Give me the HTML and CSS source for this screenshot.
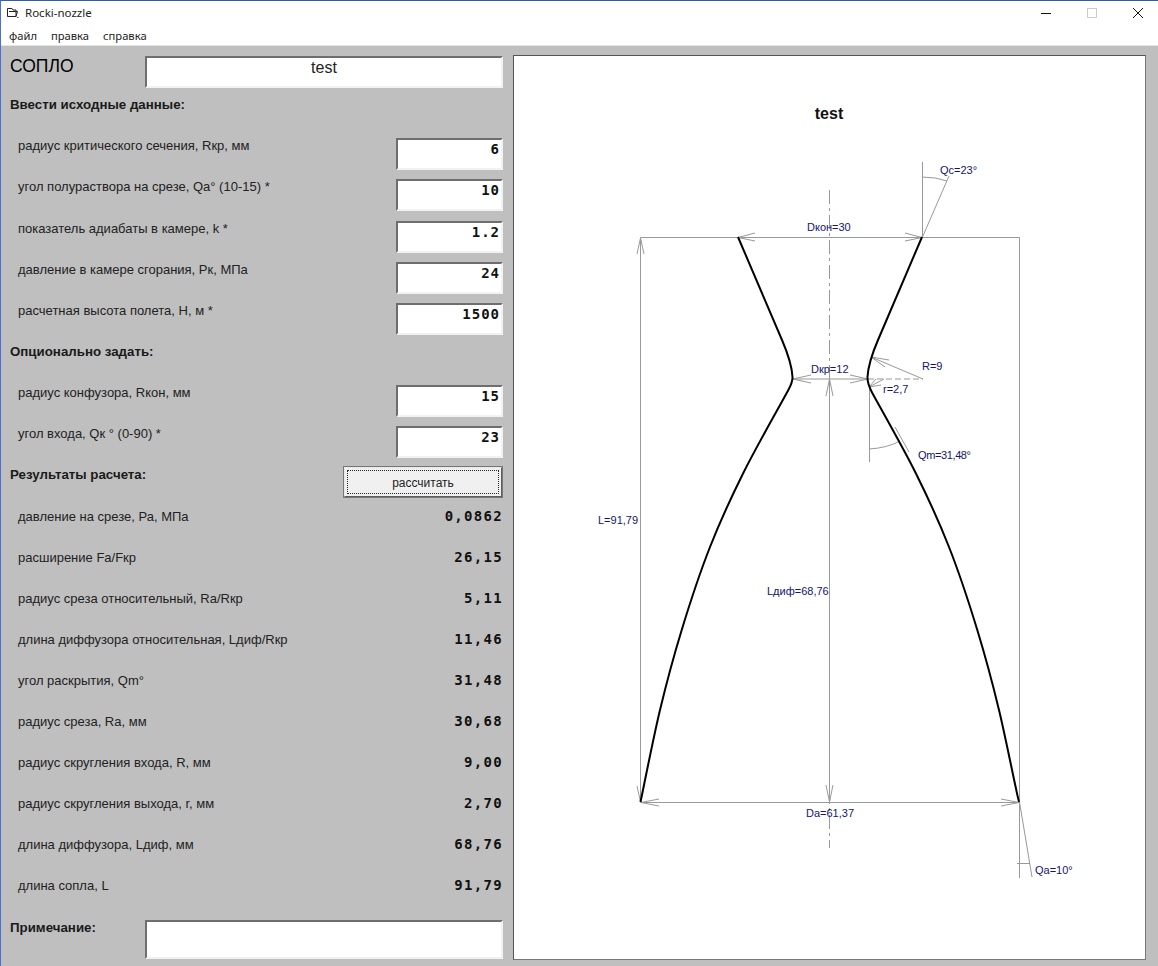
FILE: index.html
```html
<!DOCTYPE html>
<html lang="ru">
<head>
    <meta charset="UTF-8">
    <title>Rocki-nozzle</title>
    <link rel="stylesheet" href="styles.css">
</head>
<body>
    <div class="window">
        <!-- Title bar -->
        <div class="titlebar">
            <svg class="app-icon" width="13" height="12" viewBox="0 0 13 12">
                <path d="M1.5 1.500H6L7 3H10V9.500H1.500Z M3 4.500H11.500L10 9.500" fill="none" stroke="#222" stroke-width="1"/>
                <path d="M11 10.500h1.500" stroke="#555" stroke-width="1"/>
            </svg>
            <span class="app-title">Rocki-nozzle</span>
            <div class="window-buttons">
                <svg width="14" height="12" viewBox="0 0 14 12"><path d="M2 6.500H12" stroke="#111" stroke-width="1"/></svg>
                <svg width="14" height="12" viewBox="0 0 14 12"><rect x="2.500" y="1.500" width="9" height="9" fill="none" stroke="#ccc"/></svg>
                <svg width="14" height="12" viewBox="0 0 14 12"><path d="M2 1L12 11M12 1L2 11" stroke="#111" stroke-width="1"/></svg>
            </div>
        </div>

        <!-- Menu -->
        <div class="menubar">
            <span>файл</span>
            <span>правка</span>
            <span>справка</span>
        </div>

        <div class="content">
            <!-- Left column: inputs and results -->
            <div class="form">
                <div class="title-row">
                    <span class="caption">СОПЛО</span>
                    <input class="sunken name-input" type="text" value="test" readonly>
                </div>

                <h4 class="heading heading-input">Ввести исходные данные:</h4>
                <div class="fields">
                    <div class="field"><label>радиус критического сечения, Rкр, мм</label><input class="sunken num-input" value="6" readonly></div>
                    <div class="field"><label>угол полураствора на срезе, Qa° (10-15) *</label><input class="sunken num-input" value="10" readonly></div>
                    <div class="field"><label>показатель адиабаты в камере, k *</label><input class="sunken num-input" value="1.2" readonly></div>
                    <div class="field"><label>давление в камере сгорания, Рк, МПа</label><input class="sunken num-input" value="24" readonly></div>
                    <div class="field"><label>расчетная высота полета, Н, м *</label><input class="sunken num-input" value="1500" readonly></div>
                </div>

                <h4 class="heading heading-option">Опционально задать:</h4>
                <div class="fields">
                    <div class="field"><label>радиус конфузора, Rкон, мм</label><input class="sunken num-input" value="15" readonly></div>
                    <div class="field"><label>угол входа, Qк ° (0-90) *</label><input class="sunken num-input" value="23" readonly></div>
                </div>

                <div class="results-head">
                    <h4 class="heading">Результаты расчета:</h4>
                    <button class="calc-button"><span>рассчитать</span></button>
                </div>
                <div class="results">
                    <div class="result"><span>давление на срезе, Ра, МПа</span><b>0,0862</b></div>
                    <div class="result"><span>расширение Fa/Fкр</span><b>26,15</b></div>
                    <div class="result"><span>радиус среза относительный, Ra/Rкр</span><b>5,11</b></div>
                    <div class="result"><span>длина диффузора относительная, Lдиф/Rкр</span><b>11,46</b></div>
                    <div class="result"><span>угол раскрытия, Qm°</span><b>31,48</b></div>
                    <div class="result"><span>радиус среза, Ra, мм</span><b>30,68</b></div>
                    <div class="result"><span>радиус скругления входа, R, мм</span><b>9,00</b></div>
                    <div class="result"><span>радиус скругления выхода, r, мм</span><b>2,70</b></div>
                    <div class="result"><span>длина диффузора, Lдиф, мм</span><b>68,76</b></div>
                    <div class="result"><span>длина сопла, L</span><b>91,79</b></div>
                </div>

                <div class="note-row">
                    <h4 class="heading">Примечание:</h4>
                    <div class="sunken note"></div>
                </div>
            </div>

            <!-- Right column: nozzle drawing, viewBox is in window coordinates -->
            <div class="sunken drawing">
                <svg width="631" height="903" viewBox="514 56 631 903">
                    <text class="plot-title" x="829" y="119">test</text>

                    <g class="dim">
                        <!-- axis -->
                        <path d="M829.500 190V848" stroke-dasharray="14 4 3 4"/>
                        <path d="M829.500 379V802"/>
                        <!-- frame -->
                        <path d="M640.500 237.500H1019.500V802.500H640.500Z"/>
                        <!-- arrow heads -->
                        <path d="M738 237.500L755 233M738 237.500L755 241M922 237.500L905 233M922 237.500L905 241"/>
                        <path d="M640.500 238L637 254M640.500 238L644 254M640.500 802L637 786M640.500 802L644 786"/>
                        <path d="M641 802.500L659 799M641 802.500L659 806M1019 802.500L1001 799M1019 802.500L1001 806"/>
                        <path d="M829.500 379L826 396M829.500 379L833 396M829.500 802L826 785M829.500 802L833 785"/>
                        <!-- Dкр -->
                        <path d="M793 379H868M793 379L811 375M793 379L811 383M868 379L850 375M868 379L850 383"/>
                        <!-- R and r -->
                        <path d="M871 357L923 379M871 357L889 360M871 357L885 367"/>
                        <path d="M868 379H923" stroke-dasharray="6 3"/>
                        <path d="M869 387L884 379M869 387L876 379M869 387L881 385"/>
                        <!-- Qm -->
                        <path d="M869.500 387V462M869 449Q887 448 900 441M895 427L909 452"/>
                        <!-- Qc -->
                        <path d="M922.500 162V237L949 176M922 177Q936 177 947 181"/>
                        <!-- Qa -->
                        <path d="M1019.500 802V878M1019.500 802L1032 877M1017 863.500H1030"/>
                    </g>

                    <g class="nozzle">
                        <path d="M738 237L782 340C788 354 792 367 792.500 377C792.800 383 790 387 786.700 393C779.500 406.300 756.100 447.300 743.300 473C730.500 498.700 720.300 520.800 710 547C699.700 573.200 690 602.800 681.700 630C673.400 657.200 666.900 681.300 660 710C653.100 738.700 643.800 786.700 640.500 802"/>
                        <path d="M922 237L878 340C872 354 868 367 867.500 377C867.300 383 869 387 872.300 393C879.500 406.300 902.900 447.300 915.700 473C928.500 498.700 938.700 520.800 949 547C959.300 573.200 969 602.800 977.300 630C985.600 657.200 992.100 681.300 999 710C1005.900 738.700 1015.200 786.700 1019 802"/>
                    </g>

                    <g class="dim-text">
                        <text x="807" y="231">Dкон=30</text>
                        <text x="940" y="174">Qc=23°</text>
                        <text x="811" y="373">Dкр=12</text>
                        <text x="922" y="370">R=9</text>
                        <text x="883" y="393">r=2,7</text>
                        <text x="918" y="459" textLength="53">Qm=31,48°</text>
                        <text x="598" y="524">L=91,79</text>
                        <text x="767" y="595">Lдиф=68,76</text>
                        <text x="806" y="817">Da=61,37</text>
                        <text x="1035" y="874">Qa=10°</text>
                    </g>
                </svg>
            </div>
        </div>
    </div>
</body>
</html>
```

FILE: styles.css
```css
* {
    box-sizing: border-box;
}

body {
    margin: 0;
    font-family: "Liberation Sans", Arial, sans-serif;
    color: #111;
    background-color: #bfbfbf;
}

.window {
    width: 1158px;
    height: 966px;
    overflow: hidden;
    border-top: 1px solid #2f5fa8;
    border-left: 1px solid #4a6fd0;
    background-color: #bfbfbf;
}

.titlebar {
    display: flex;
    align-items: center;
    height: 23px;
    padding-left: 5px;
    background-color: white;
}

.app-icon {
    margin-right: 6px;
}

.app-title {
    font-family: "Noto Sans", sans-serif;
    font-size: 11.5px;
    color: #222;
}

.window-buttons {
    display: flex;
    gap: 32px;
    margin-left: auto;
    margin-right: 13px;
}

.menubar {
    display: flex;
    gap: 14px;
    height: 22px;
    padding: 4px 0 0 8px;
    font-family: "Noto Sans", sans-serif;
    font-size: 11.2px;
    line-height: 15px;
    color: #222;
    background-color: white;
    border-bottom: 1px solid #e4e4e4;
}

.content {
    display: flex;
}

.form {
    width: 512px;
    padding: 10px 10px 0 9px;
}

.sunken {
    border: 2px solid;
    border-color: #6e6e6e #f2f2f2 #f2f2f2 #6e6e6e;
    background-color: white;
    border-radius: 0;
    outline: none;
}

.title-row {
    display: flex;
    height: 31px;
}

.caption {
    width: 135px;
    padding-top: 1px;
    font-size: 17.5px;
    line-height: 18px;
    color: #000;
}

.name-input {
    width: 358px;
    height: 32px;
    padding: 0 0 8px;
    text-align: center;
    font-family: "Liberation Sans", Arial, sans-serif;
    font-size: 16px;
    color: #222;
}

.heading {
    margin: 0;
    font-size: 13.3px;
    line-height: 14px;
    font-weight: bold;
    color: #1a1a1a;
}

.heading-input {
    margin-top: 11px;
    margin-bottom: 26px;
}

.heading-option {
    margin-top: 11px;
    margin-bottom: 26px;
}

.fields {
    display: flex;
    flex-direction: column;
    gap: 10.25px;
}

.field {
    display: flex;
    justify-content: space-between;
    height: 31px;
    padding-left: 8px;
}

.field label {
    padding-top: 1px;
    font-size: 13px;
    line-height: 14px;
    color: #222;
}

.num-input {
    width: 107px;
    height: 32px;
    padding: 0 1px 10px 0;
    text-align: right;
    font-family: "DejaVu Sans Mono", monospace;
    font-size: 14px;
    font-weight: bold;
    letter-spacing: 1px;
    color: #111;
}

.results-head {
    display: flex;
    justify-content: space-between;
    margin-top: 8.75px;
    height: 32px;
}

.results-head .heading {
    padding-top: 2px;
}

.calc-button {
    width: 160px;
    height: 32px;
    padding: 2px;
    border: 2px solid;
    border-color: #e8e8e8 #5e5e5e #5e5e5e #e8e8e8;
    outline: 1px solid #777;
    outline-offset: -1px;
    background-color: #f0f0f0;
    font-family: "Liberation Sans", Arial, sans-serif;
    font-size: 12px;
    color: #222;
}

.calc-button span {
    display: block;
    height: 100%;
    line-height: 24px;
    border: 1px dotted #222;
}

.results {
    display: flex;
    flex-direction: column;
    gap: 5px;
}

.result {
    display: flex;
    justify-content: space-between;
    align-items: center;
    height: 36px;
    padding-left: 8px;
    font-size: 13px;
    color: #222;
}

.result b {
    font-family: "DejaVu Sans Mono", monospace;
    font-size: 14px;
    letter-spacing: 1.3px;
    color: #111;
}

.note-row {
    display: flex;
    margin-top: 17px;
}

.note-row .heading {
    width: 135px;
    padding-top: 1px;
}

.note {
    width: 358px;
    height: 39px;
}

.drawing {
    width: 633px;
    height: 905px;
    margin-top: 9px;
    border-width: 1px;
    border-color: #555 #777 #777 #555;
}

.drawing svg {
    display: block;
}

.plot-title {
    font-size: 16px;
    font-weight: bold;
    text-anchor: middle;
    fill: #111;
}

.dim {
    fill: none;
    stroke: #999;
    stroke-width: 1;
}

.nozzle {
    fill: none;
    stroke: #000;
    stroke-width: 2;
    stroke-linejoin: round;
}

.dim-text {
    font-size: 11px;
    fill: #14146e;
}
```
